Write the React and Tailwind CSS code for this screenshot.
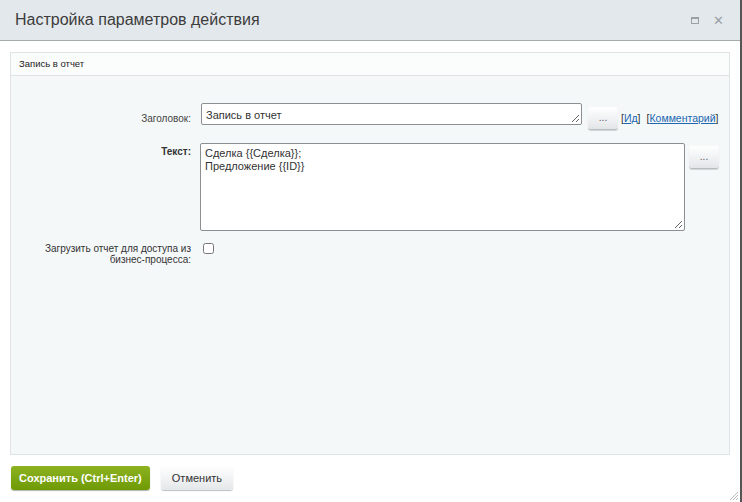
import React from 'react';

const font = { fontFamily: '"Liberation Sans", Arial, sans-serif' };

const Grip = () => (
  <svg className="absolute bottom-[1px] right-[1px]" width="9" height="9" viewBox="0 0 9 9">
    <path d="M8 1 L1 8 M8 5 L5 8" stroke="#666" strokeWidth="1" fill="none" />
  </svg>
);

const DotsButton = ({ className = '' }) => (
  <button
    className={`h-[23px] w-[30px] rounded-[3px] border-b border-[#b8bcbf] bg-gradient-to-b from-[#ffffff] to-[#e3e6e8] text-[10px] leading-none text-[#555] shadow-[0_1px_1px_rgba(0,0,0,0.15)] ${className}`}
  >
    ...
  </button>
);

const App = () => {
  return (
    <div className="relative flex h-[502px] w-[742px] flex-col border-r-2 border-[#555] bg-white" style={font}>
      <div className="flex h-[41px] shrink-0 items-center justify-between border-b border-[#a5aaad] bg-[#e3e8ec] pl-[15px] pr-[16px]">
        <span className="text-[16px] text-[#3c3c3c]">Настройка параметров действия</span>
        <div className="flex items-center gap-[14px] text-[#9aa0a4]">
          <span className="block h-[7px] w-[8px] border border-[#9aa0a4] border-t-2"></span>
          <span className="text-[13px] leading-none">✕</span>
        </div>
      </div>

      <div className="mx-[10px] mt-[11px] flex h-[403px] flex-col border border-[#dfe4e6] bg-[#f5f8f9]">
        <div className="flex h-[23px] items-center border-b border-[#dfe4e6] bg-[#fbfcfc] px-[8px] text-[9.5px] text-[#222]">
          Запись в отчет
        </div>

        <div className="flex flex-col pt-[27px] text-[10px] text-[#333]">
          <div className="flex items-start">
            <div className="w-[180px] pt-[8px] text-right text-[#444]">Заголовок:</div>
            <div className="ml-[10px] flex items-start">
              <div className="relative h-[22px] w-[381px] rounded-[2px] border border-[#8b8f92] bg-white px-[4px] pt-[3px] text-[11px] text-[#333]">
                Запись в отчет
                <Grip />
              </div>
              <DotsButton className="ml-[6px] mt-[4px]" />
              <span className="ml-[3px] mt-[8px] text-[10.5px] text-[#333]">
                [<span className="text-[#2067b0] underline">Ид</span>]
              </span>
              <span className="ml-[6px] mt-[8px] text-[10.5px] text-[#333]">
                [<span className="text-[#2067b0] underline">Комментарий</span>]
              </span>
            </div>
          </div>

          <div className="mt-[13px] flex items-start">
            <div className="w-[180px] pt-[1px] text-right font-bold text-[#333]">Текст:</div>
            <div className="ml-[9px] flex items-start">
              <div className="relative h-[88px] w-[485px] rounded-[2px] border border-[#8b8f92] bg-white px-[4px] pt-[3px] text-[11px] leading-[13px] text-[#333]">
                <div>Сделка {'{{Сделка}}'};</div>
                <div>Предложение {'{{ID}}'}</div>
                <Grip />
              </div>
              <DotsButton className="ml-[4px] mt-[3px]" />
            </div>
          </div>

          <div className="mt-[12px] flex items-start">
            <div className="w-[180px] text-right leading-[11px] text-[#333]">
              Загрузить отчет для доступа из
              <br />
              бизнес-процесса:
            </div>
            <input type="checkbox" className="ml-[12px] mt-[0px] h-[11px] w-[11px]" />
          </div>
        </div>
      </div>

      <div className="flex items-start gap-[11px] pl-[11px] pt-[11px]">
        <button className="h-[24px] rounded-[3px] bg-gradient-to-b from-[#8db21f] to-[#6e9a04] px-[8px] text-[11px] font-bold text-white shadow-[0_1px_1px_rgba(0,0,0,0.3)]">
          Сохранить (Ctrl+Enter)
        </button>
        <button className="h-[24px] rounded-[3px] bg-gradient-to-b from-[#ffffff] to-[#e4e7e9] px-[11px] text-[11px] text-[#333] shadow-[0_1px_1px_rgba(0,0,0,0.25)]">
          Отменить
        </button>
      </div>

      <svg className="absolute bottom-[1px] right-[1px]" width="10" height="10" viewBox="0 0 10 10">
        <path d="M9 1 L1 9 M9 4 L4 9 M9 7 L7 9" stroke="#bbb" strokeWidth="1" fill="none" />
      </svg>
    </div>
  );
};

export default App;
